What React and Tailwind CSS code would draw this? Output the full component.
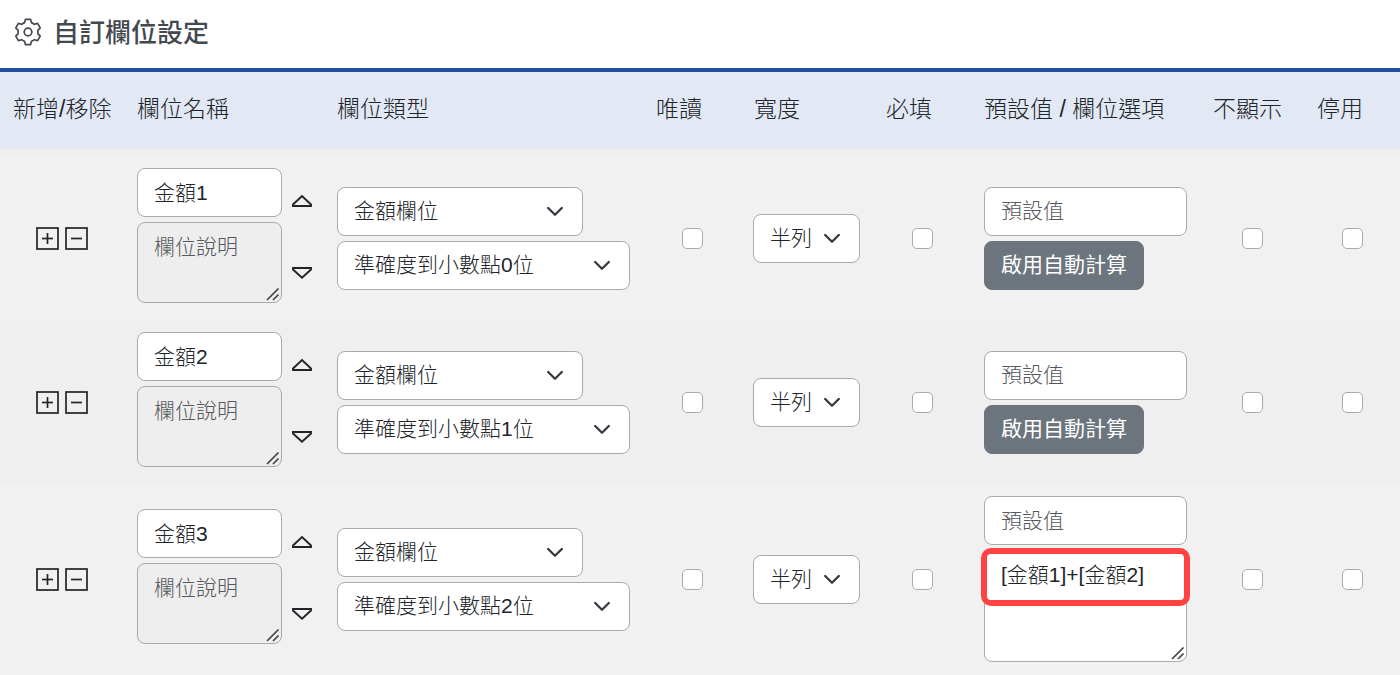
import React, { useState } from "react";

const columns = [
  { label: "新增/移除", width: "w-[124px]" },
  { label: "欄位名稱", width: "w-[200px]" },
  { label: "欄位類型", width: "w-[319px]" },
  { label: "唯讀", width: "w-[98px]" },
  { label: "寬度", width: "w-[132px]" },
  { label: "必填", width: "w-[98px]" },
  { label: "預設值 / 欄位選項", width: "w-[229px]" },
  { label: "不顯示", width: "w-[104px]" },
  { label: "停用", width: "w-[96px]" },
];

const initialFields = [
  { id: 1, name: "金額1", precision: "0", formula: null },
  { id: 2, name: "金額2", precision: "1", formula: null },
  { id: 3, name: "金額3", precision: "2", formula: "[金額1]+[金額2]" },
];

const controlClass = "block h-[49px] rounded-lg border border-[#aaaaaa] bg-white px-4 text-[#212529] placeholder:text-[#55585c]";

const Select = ({ label, width, children, ...props }) => (
  <div className={`relative ${width}`}>
    <select aria-label={label} className={`${controlClass} w-full appearance-none`} {...props}>
      {children}
    </select>
    <svg
      viewBox="0 0 16 16"
      className="pointer-events-none absolute top-4 right-5 h-4 w-4"
      fill="none"
      stroke="#343a40"
      strokeWidth="2.3"
      strokeLinecap="round"
      strokeLinejoin="round"
    >
      <path d="M1.2 5L8 11.7 14.8 5" />
    </svg>
  </div>
);

const Checkbox = ({ label }) => (
  <input
    type="checkbox"
    aria-label={label}
    className="mx-auto block h-[21px] w-[21px] appearance-none rounded-[5px] border border-[#aaaaaa] bg-white checked:bg-[#1f4fa3]"
  />
);

const GearIcon = () => (
  <svg
    viewBox="-14 -14 28 28"
    className="h-7 w-7"
    fill="none"
    stroke="#444950"
    strokeWidth="1.7"
    strokeLinejoin="round"
  >
    <path d="M-2.6 -12.6H2.6L3.4 -9.4Q5 -8.8 6.4 -7.7L9.6 -8.6 12.2 -4.1 9.8 -1.7Q10.1 0 9.8 1.7L12.2 4.1 9.6 8.6 6.4 7.7Q5 8.8 3.4 9.4L2.6 12.6H-2.6L-3.4 9.4Q-5 8.8 -6.4 7.7L-9.6 8.6 -12.2 4.1 -9.8 1.7Q-10.1 0 -9.8 -1.7L-12.2 -4.1 -9.6 -8.6 -6.4 -7.7Q-5 -8.8 -3.4 -9.4Z" />
    <circle r="3.8" />
  </svg>
);

const ResizeGrip = () => (
  <svg
    viewBox="0 0 14 14"
    className="pointer-events-none absolute right-0.5 bottom-0.5 h-3.5 w-3.5"
    stroke="#444444"
    strokeWidth="1.7"
  >
    <path d="M1 13L12.5 1.5M7 13l5.5-5.5" />
  </svg>
);

const SquareIcon = ({ plus }) => (
  <svg viewBox="0 0 23 23" className="h-[23px] w-[23px]" fill="none" stroke="#212529" strokeWidth="1.7">
    <rect x="1" y="1" width="21" height="21" />
    <path d="M6 11.5h11" />
    {plus && <path d="M11.5 6v11" />}
  </svg>
);

const FieldRow = ({ field, onUpdate }) => (
  <tr className="bg-[#f1f1f1] even:bg-[#efefef]">
    <td className="px-[13px] py-3">
      <div className="flex justify-center gap-1.5">
        <button type="button" aria-label="新增">
          <SquareIcon plus />
        </button>
        <button type="button" aria-label="移除">
          <SquareIcon />
        </button>
      </div>
    </td>
    <td className="py-3 pl-[13px]">
      <div className="flex gap-2.5 pb-[5px]">
        <div className="flex w-[145px] flex-col gap-[5px]">
          <input
            type="text"
            aria-label="欄位名稱"
            value={field.name}
            onChange={(e) => onUpdate(field.id, "name", e.target.value)}
            className={`${controlClass} w-full pb-1`}
          />
          <div className="relative">
            <textarea
              aria-label="欄位說明"
              placeholder="欄位說明"
              className="block h-[81px] w-full resize-none rounded-lg border border-[#aaaaaa] bg-[#eeeeee] px-4 py-2 leading-[31px] text-[#212529] placeholder:text-[#55585c]"
            />
            <ResizeGrip />
          </div>
        </div>
        <div className="flex flex-col gap-[59px] pt-[26px]">
          <button type="button" aria-label="上移">
            <svg viewBox="0 0 20 13" className="h-[13px] w-5" fill="none" stroke="#212529" strokeWidth="1.9">
              <path d="M1 12v-1.5L10 2l9 8.5V12z" />
            </svg>
          </button>
          <button type="button" aria-label="下移">
            <svg viewBox="0 0 20 13" className="h-[13px] w-5" fill="none" stroke="#212529" strokeWidth="1.9">
              <path d="M1 2v1.5l9 8.2 9-8.2V2z" />
            </svg>
          </button>
        </div>
      </div>
    </td>
    <td className="px-[13px] py-3">
      <div className="flex flex-col gap-[5px]">
        <Select label="欄位類型" defaultValue="money" width="w-[246px]">
          <option value="money">金額欄位</option>
        </Select>
        <Select
          label="準確度"
          value={field.precision}
          onChange={(e) => onUpdate(field.id, "precision", e.target.value)}
          width="w-[293px]"
        >
          <option value="0">準確度到小數點0位</option>
          <option value="1">準確度到小數點1位</option>
          <option value="2">準確度到小數點2位</option>
        </Select>
      </div>
    </td>
    <td className="px-[13px] py-3">
      <Checkbox label="唯讀" />
    </td>
    <td className="py-3 pl-3">
      <Select label="寬度" defaultValue="half" width="w-[107px]">
        <option value="half">半列</option>
        <option value="full">全列</option>
      </Select>
    </td>
    <td className="px-[13px] py-3">
      <Checkbox label="必填" />
    </td>
    <td className="px-[13px] py-3">
      <div className="flex flex-col items-start gap-[5px]">
        <input type="text" aria-label="預設值" placeholder="預設值" className={`${controlClass} w-full`} />
        {field.formula === null ? (
          <button
            type="button"
            className="h-[49px] rounded-lg border border-[#6c757d] bg-[#6c757d] px-4 font-normal text-white"
          >
            啟用自動計算
          </button>
        ) : (
          <div className="relative w-full">
            <textarea
              aria-label="計算公式"
              value={field.formula}
              onChange={(e) => onUpdate(field.id, "formula", e.target.value)}
              className="block h-28 w-full resize-none rounded-lg border border-[#aaaaaa] bg-white px-4 py-2 leading-[31px] text-[#212529]"
            />
            <div className="pointer-events-none absolute -inset-x-[3px] -top-0.5 h-[58px] rounded-[10px] border-6 border-[#ff4242]" />
            <ResizeGrip />
          </div>
        )}
      </div>
    </td>
    <td className="px-[13px] py-3">
      <Checkbox label="不顯示" />
    </td>
    <td className="px-[13px] py-3">
      <Checkbox label="停用" />
    </td>
  </tr>
);

const App = () => {
  const [fields, setFields] = useState(initialFields);

  const updateField = (id, key, value) => {
    setFields(fields.map((field) => (field.id === id ? { ...field, [key]: value } : field)));
  };

  return (
    <div className="min-h-screen bg-[#f1f1f1] font-['Liberation_Sans','Noto_Sans_CJK_TC',sans-serif] text-[21px] font-light text-[#212529]">
      <header className="flex h-[72px] items-center gap-[11px] border-b-4 border-[#1f4fa3] bg-white px-3.5 pb-1">
        <GearIcon />
        <h1 className="pt-0.5 text-[26px] leading-8 font-medium text-[#444950]">自訂欄位設定</h1>
      </header>
      <table className="w-full table-fixed border-separate border-spacing-0">
        <thead>
          <tr className="bg-[#e2e9f5]">
            {columns.map((column) => (
              <th
                key={column.label}
                className={`${column.width} h-[84px] border-b-7 border-[#efefef] pb-0.5 pl-[13px] text-left text-[23px] font-light whitespace-nowrap`}
              >
                {column.label}
              </th>
            ))}
          </tr>
        </thead>
        <tbody>
          {fields.map((field) => (
            <FieldRow key={field.id} field={field} onUpdate={updateField} />
          ))}
        </tbody>
      </table>
    </div>
  );
};

export default App;
